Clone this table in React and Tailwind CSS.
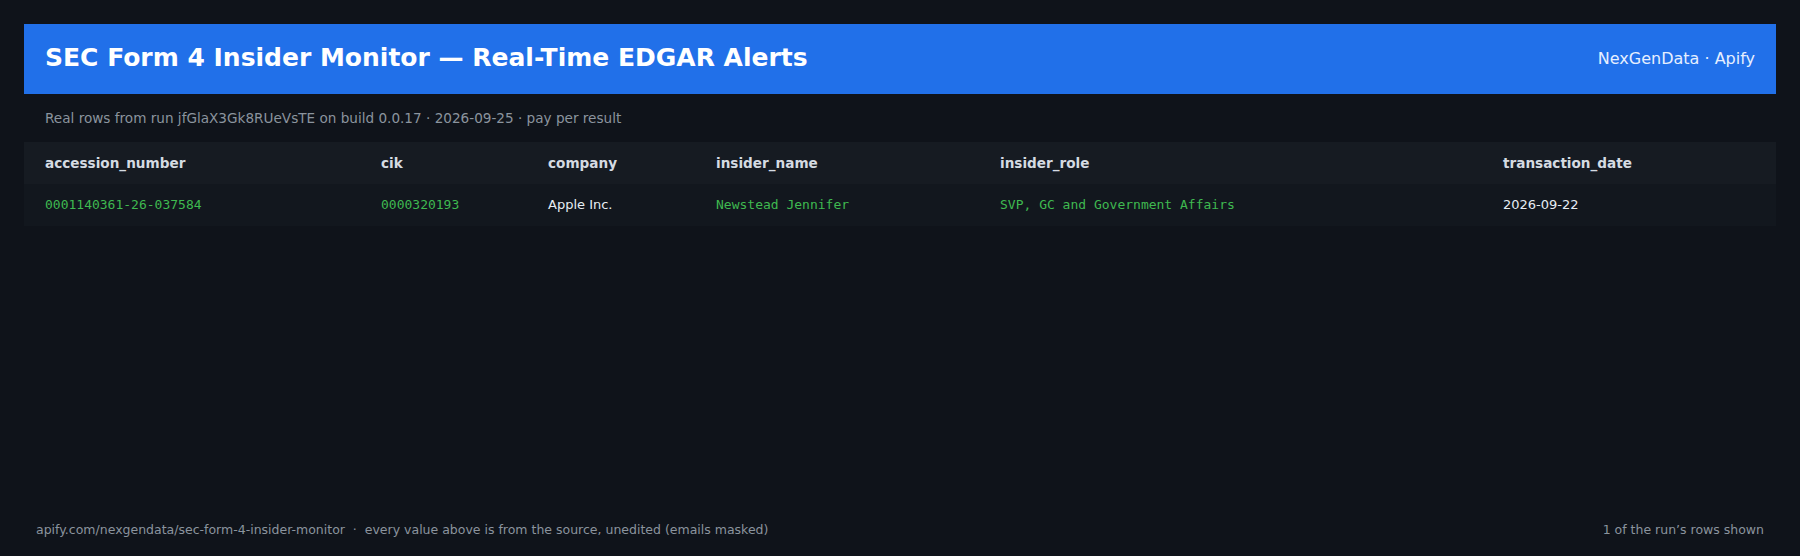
import React from 'react';

const columns = [
    { key: 'accession_number', width: 336, mono: true },
    { key: 'cik', width: 167, mono: true },
    { key: 'company', width: 168, mono: false },
    { key: 'insider_name', width: 284, mono: true },
    { key: 'insider_role', width: 503, mono: true },
    { key: 'transaction_date', width: 294, mono: false },
];

const rows = [
    {
        accession_number: '0001140361-26-037584',
        cik: '0000320193',
        company: 'Apple Inc.',
        insider_name: 'Newstead Jennifer',
        insider_role: 'SVP, GC and Government Affairs',
        transaction_date: '2026-09-22',
    },
];

const App = () => {
    return (
        <div className="h-[556px] w-full bg-[#0f131a] flex flex-col px-6 pt-6 font-['DejaVu_Sans',sans-serif]">
            {/* Header */}
            <div className="h-[70px] bg-[#2170e9] flex items-center justify-between px-[21px]">
                <h1 className="text-[25px] leading-[30px] font-bold text-white mb-[3px]">
                    SEC Form 4 Insider Monitor — Real-Time EDGAR Alerts
                </h1>
                <span className="text-[16px] text-[#e6efff]">NexGenData · Apify</span>
            </div>

            <p className="mt-[14px] mb-[14px] px-[21px] text-[13.6px] leading-[20px] text-[#8b949e]">
                Real rows from run jfGlaX3Gk8RUeVsTE on build 0.0.17 · 2026-09-25 · pay per result
            </p>

            {/* Data table */}
            <table className="w-full table-fixed border-collapse">
                <colgroup>
                    {columns.map((c) => (
                        <col key={c.key} style={{ width: c.width }} />
                    ))}
                </colgroup>
                <thead>
                    <tr className="bg-[#161b22] h-[42px]">
                        {columns.map((c) => (
                            <th key={c.key} className="text-left px-[21px] text-[13.6px] font-bold text-[#d5dbe2]">
                                {c.key}
                            </th>
                        ))}
                    </tr>
                </thead>
                <tbody>
                    {rows.map((r, i) => (
                        <tr key={i} className="bg-[#12171e] h-[42px]">
                            {columns.map((c) => (
                                <td
                                    key={c.key}
                                    className={
                                        c.mono
                                            ? "px-[21px] pb-[1px] text-[13px] text-[#3fb950] font-['DejaVu_Sans_Mono',monospace] whitespace-nowrap"
                                            : 'px-[21px] pb-[1px] text-[13px] text-[#e6edf3] whitespace-nowrap'
                                    }
                                >
                                    {r[c.key]}
                                </td>
                            ))}
                        </tr>
                    ))}
                </tbody>
            </table>

            <div className="flex-1" />

            {/* Footer */}
            <div className="flex items-center justify-between px-3 pb-[17px] text-[12.5px] leading-[18px] text-[#8b949e]">
                <span>apify.com/nexgendata/sec-form-4-insider-monitor &nbsp;·&nbsp; every value above is from the source, unedited (emails masked)</span>
                <span>1 of the run’s rows shown</span>
            </div>
        </div>
    );
};

export default App;
